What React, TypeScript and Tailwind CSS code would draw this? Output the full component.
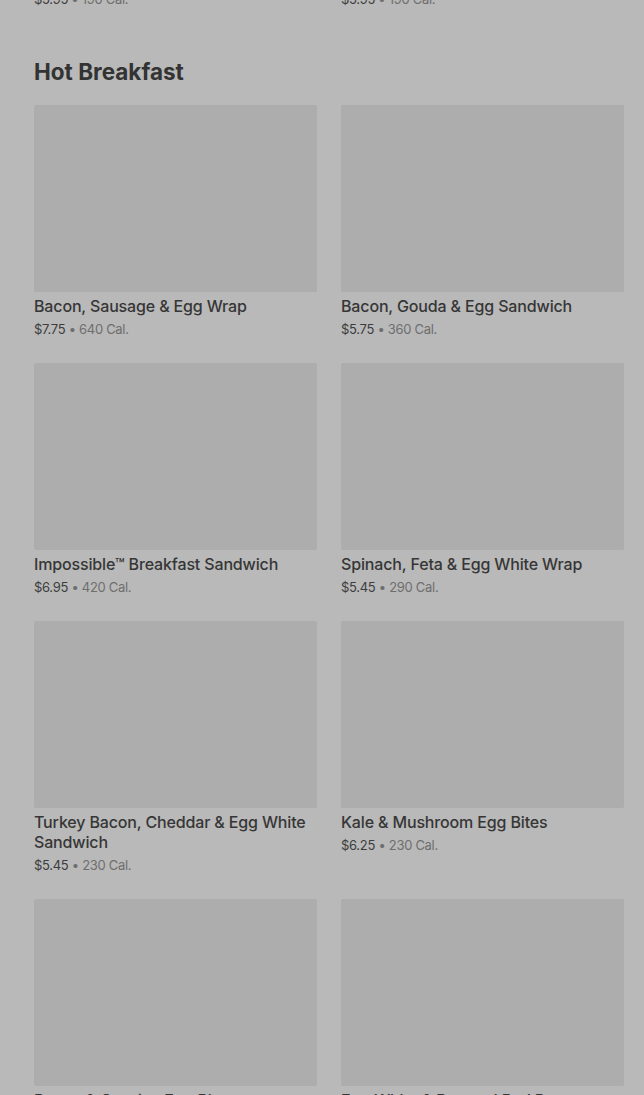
import React from 'react';

interface Item {
    name: string;
    price: string;
    cal: string;
}

const items: Item[] = [
    { name: 'Bacon, Sausage & Egg Wrap', price: '$7.75', cal: '640 Cal.' },
    { name: 'Bacon, Gouda & Egg Sandwich', price: '$5.75', cal: '360 Cal.' },
    { name: 'Impossible™ Breakfast Sandwich', price: '$6.95', cal: '420 Cal.' },
    { name: 'Spinach, Feta & Egg White Wrap', price: '$5.45', cal: '290 Cal.' },
    { name: 'Turkey Bacon, Cheddar & Egg White Sandwich', price: '$5.45', cal: '230 Cal.' },
    { name: 'Kale & Mushroom Egg Bites', price: '$6.25', cal: '230 Cal.' },
    { name: 'Bacon & Gruyère Egg Bites', price: '$6.25', cal: '300 Cal.' },
    { name: 'Egg White & Roasted Red Pepper Egg Bites', price: '$5.25', cal: '170 Cal.' },
];

function PriceLine({ price, cal }: { price: string; cal: string }) {
    return (
        <div className="text-[13px] leading-[18px] tracking-[-0.3px]">
            <span className="text-[#3d3d3d]">{price}</span>
            <span className="text-[#6e6e6e]"> • {cal}</span>
        </div>
    );
}

export default function App() {
    return (
        <div
            className="min-h-screen h-[1095px] overflow-hidden bg-[#b9b9b9] pl-[34px] pr-[20px]"
            style={{ fontFamily: 'Inter, "Noto Sans", sans-serif' }}
        >
            {/* tail of the previous section */}
            <div className="grid grid-cols-2 gap-x-6 mt-[-10px]">
                <PriceLine price="$5.95" cal="190 Cal." />
                <PriceLine price="$5.95" cal="190 Cal." />
            </div>

            <h2 className="mt-[50px] text-[22.5px] leading-[28px] font-bold text-[#333333]">
                Hot Breakfast
            </h2>

            <div className="mt-[19px] grid grid-cols-2 gap-x-6 gap-y-[25px]">
                {items.map((item) => (
                    <div key={item.name}>
                        <div className="h-[187px] bg-[#adadad] rounded-[2px]" />
                        <div className="mt-1 pr-[6px] text-[16px] leading-5 font-medium tracking-[-0.15px] text-[#363636]">
                            {item.name}
                        </div>
                        <div className="mt-1">
                            <PriceLine price={item.price} cal={item.cal} />
                        </div>
                    </div>
                ))}
            </div>
        </div>
    );
}
